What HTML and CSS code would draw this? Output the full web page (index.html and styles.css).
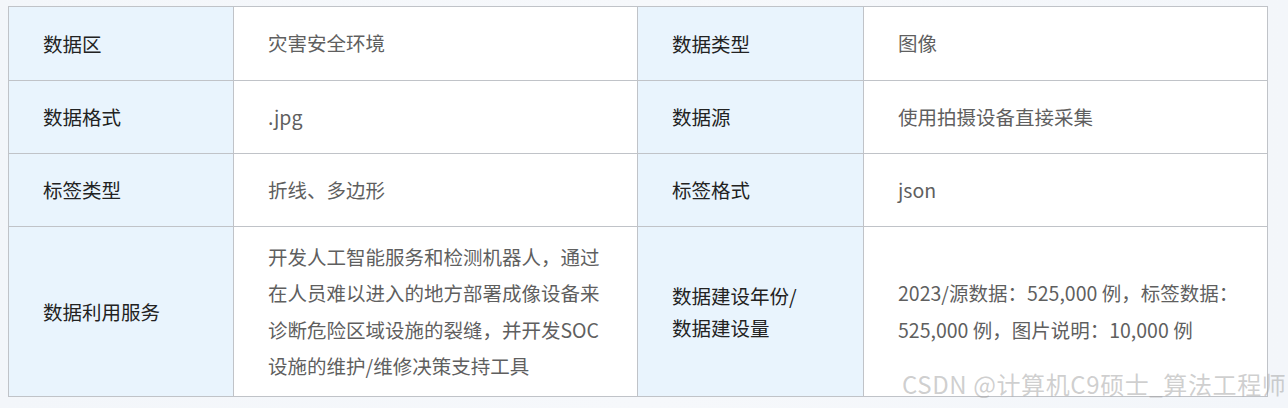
FILE: index.html
```html
<!DOCTYPE html>
<html lang="zh-CN">
<head>
<meta charset="utf-8">
<title>数据信息</title>
<link rel="stylesheet" href="styles.css">
</head>
<body>
<div class="wrap">
<table class="info">
  <colgroup>
    <col class="c1"><col class="c2"><col class="c3"><col class="c4">
  </colgroup>
  <tr class="r first">
    <td class="label">数据区</td>
    <td class="value">灾害安全环境</td>
    <td class="label">数据类型</td>
    <td class="value">图像</td>
  </tr>
  <tr class="r">
    <td class="label">数据格式</td>
    <td class="value">.jpg</td>
    <td class="label">数据源</td>
    <td class="value">使用拍摄设备直接采集</td>
  </tr>
  <tr class="r">
    <td class="label">标签类型</td>
    <td class="value">折线、多边形</td>
    <td class="label">标签格式</td>
    <td class="value">json</td>
  </tr>
  <tr class="r tall">
    <td class="label">数据利用服务</td>
    <td class="value multi">开发人工智能服务和检测机器人，通过<br>在人员难以进入的地方部署成像设备来<br>诊断危险区域设施的裂缝，并开发SOC<br>设施的维护/维修决策支持工具</td>
    <td class="label two">数据建设年份/<br>数据建设量</td>
    <td class="value multi">2023/源数据：525,000 例，标签数据：<br>525,000 例，图片说明：10,000 例</td>
  </tr>
</table>
<div class="watermark">CSDN @计算机C9硕士_算法工程师</div>
</div>
</body>
</html>
```
FILE: styles.css
```css
html, body {
  margin: 0;
  padding: 0;
}
body {
  width: 1288px;
  height: 408px;
  overflow: hidden;
  background: linear-gradient(90deg, #f3f6fa 0%, #f6f8fb 50%, #f3f6fa 100%);
  font-family: "Noto Sans CJK SC", "Noto Sans", sans-serif;
}
.wrap {
  position: relative;
  padding: 6px 0 0 8px;
  height: 402px;
}
.info {
  border-collapse: collapse;
  table-layout: fixed;
  width: 1259px;
  background: #ffffff;
}
.c1 { width: 225px; }
.c2 { width: 404px; }
.c3 { width: 226px; }
.c4 { width: 404px; }
.info td {
  border: 1.5px solid #c0c3c8;
  padding: 0 20px 0 34px;
  font-size: 19.5px;
  vertical-align: middle;
}
.r td { height: 72px; }
.first td { height: 73px; }
.tall td { height: 169px; }
.label {
  background: #e9f4fd;
  color: #222222;
  line-height: 32px;
}
.value {
  color: #5f5f5f;
  line-height: 36.5px;
}
.multi {
  padding-top: 2px;
}
.watermark {
  position: absolute;
  left: 902px;
  top: 367px;
  font-size: 24px;
  line-height: 34px;
  letter-spacing: 0.6px;
  color: rgba(160, 160, 160, 0.5);
  white-space: nowrap;
}
```
